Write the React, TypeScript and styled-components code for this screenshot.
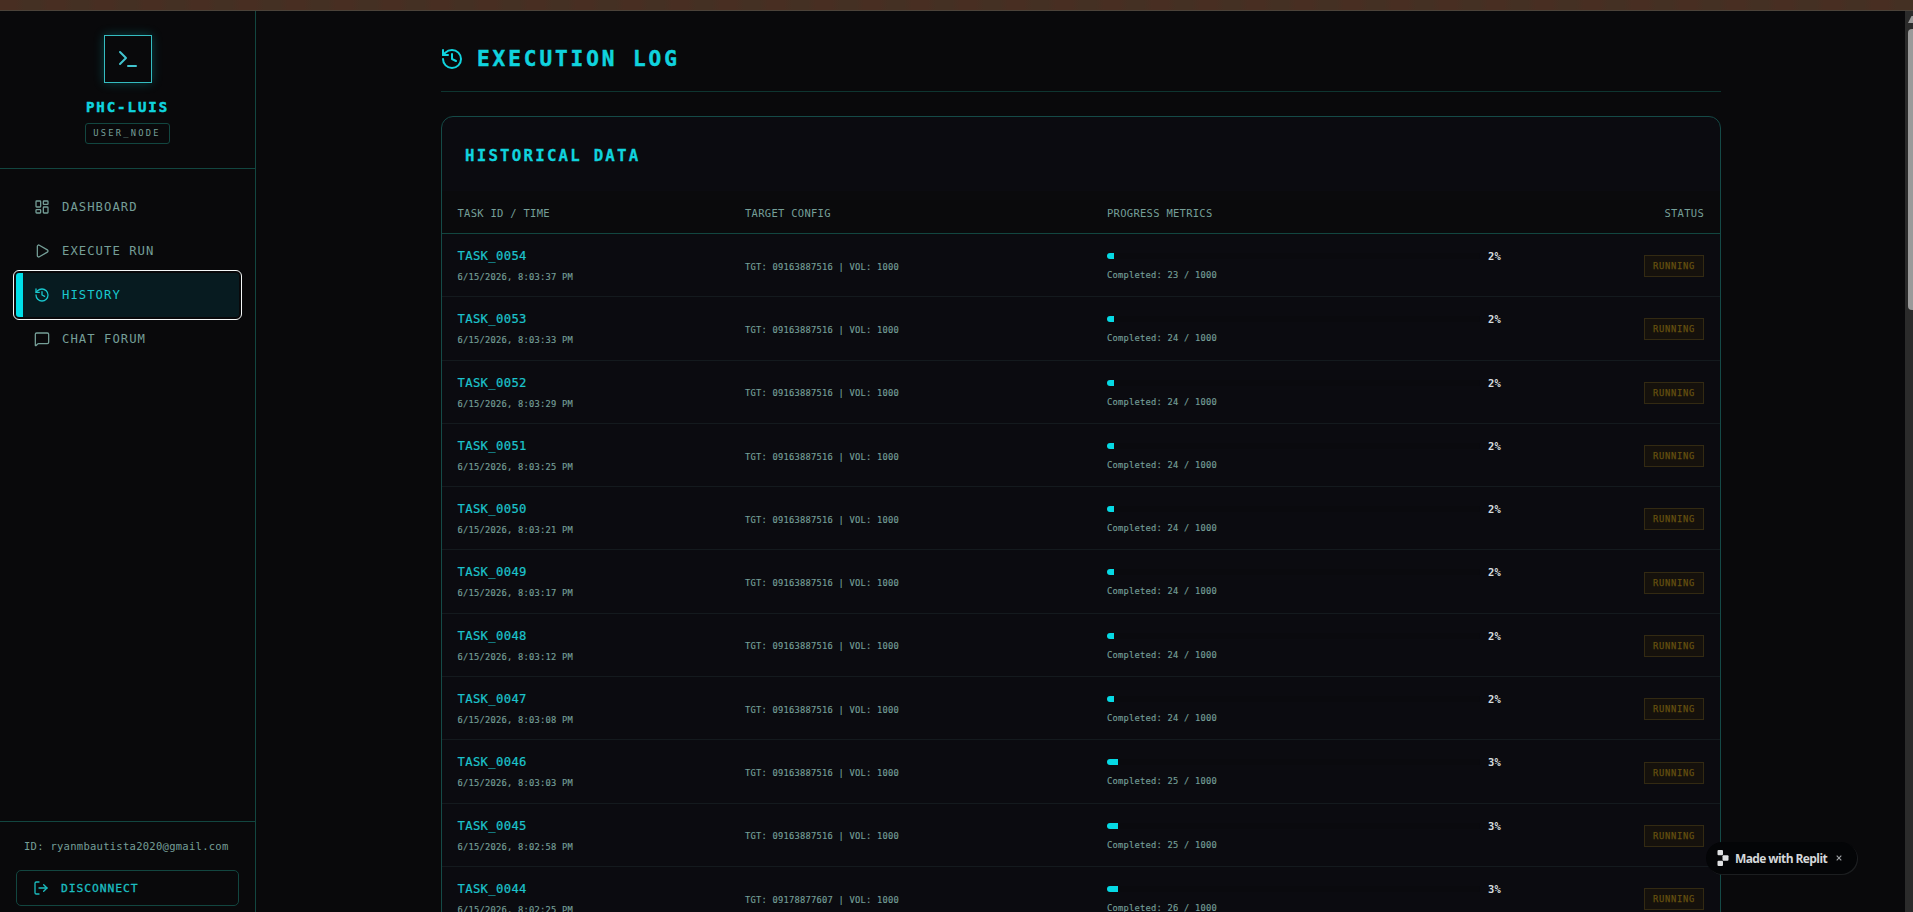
import React from 'react';
import styled, { createGlobalStyle, css } from 'styled-components';
import { LayoutDashboard, Play, History, MessageSquare, LogOut, Terminal } from 'lucide-react';

const cyan = '#10d3de';
const muted = '#759f98';
const line = '#124640';

const Global = createGlobalStyle`
  *, *::before, *::after { box-sizing: border-box; }
  body { margin: 0; background: #09090b; overflow: hidden; }
`;

/* Size is given as the em of the design; glyphs are set at 7/8 of it with a pitch of 0.55em. */
const mono = (size: number, spacing = 0, weight = 400) => css`
  font-family: 'DejaVu Sans Mono', monospace;
  font-size: ${size * 0.875}px;
  letter-spacing: ${size * (0.5498 - 0.602 * 0.875) + spacing}px;
  font-weight: ${weight};
  white-space: pre;
`;

const Screen = styled.div`
  display: flex;
  flex-direction: column;
  width: 100vw;
  height: 100vh;
  overflow: hidden;
  color: ${muted};
`;

const TopStrip = styled.div`
  flex: 0 0 11px;
  border-bottom: 1px solid #4b4239;
  background: repeating-linear-gradient(90deg, #482e22 0 16px, #443023 24px 40px, #482e22 48px);
`;

const Body = styled.div`
  flex: 1;
  min-height: 0;
  display: flex;
`;

const Sidebar = styled.aside`
  flex: 0 0 256px;
  display: flex;
  flex-direction: column;
  border-right: 1px solid ${line};
`;

const Profile = styled.div`
  height: 158px;
  padding-top: 24px;
  display: flex;
  flex-direction: column;
  align-items: center;
  border-bottom: 1px solid ${line};
`;

const LogoBox = styled.div`
  width: 48px;
  height: 48px;
  display: grid;
  place-items: center;
  color: #42c4cf;
  border: 1px solid #35bcc1;
  box-shadow: 0 0 10px rgba(0, 229, 240, 0.25);
`;

const Name = styled.div`
  ${mono(16, 1.6, 700)}
  -webkit-text-stroke: 0.5px currentColor;
  line-height: 24px;
  margin-top: 12px;
  color: ${cyan};
`;

const Role = styled.div`
  ${mono(10, 2)}
  height: 21px;
  margin-top: 4px;
  padding: 0 8px 0 7px;
  line-height: 18px;
  border: 1px solid ${line};
  border-radius: 3px;
`;

const Nav = styled.nav`
  flex: 1;
  padding: 16px;
`;

const NavItem = styled.a<{ $active?: boolean }>`
  ${mono(14, 0.7)}
  display: flex;
  align-items: center;
  gap: 12px;
  height: 44px;
  padding-left: 18px;
  border-radius: 3px;
  color: ${muted};
  ${({ $active }) => $active && css`
    color: #19c9cf;
    padding-left: 11px;
    border-left: 7px solid #00dfe9;
    background: #071b20;
    outline: 1px solid #f4f8f8;
    outline-offset: 2px;
  `}
`;

const Account = styled.div`
  height: 91px;
  padding: 15px 16px 0;
  border-top: 1px solid ${line};
`;

const AccountId = styled.div`
  ${mono(12)}
  line-height: 18px;
  padding-left: 8px;
`;

const Disconnect = styled.button`
  ${mono(13, 0.6)}
  -webkit-text-stroke: 0.3px currentColor;
  display: flex;
  align-items: center;
  gap: 12px;
  width: 223px;
  height: 36px;
  margin-top: 15px;
  padding: 0 0 0 16px;
  color: #1bbdc0;
  background: transparent;
  border: 1px solid ${line};
  border-radius: 5px;
`;

const Main = styled.main`
  flex: 1;
  min-width: 0;
  overflow: hidden;
  display: flex;
  flex-direction: column;
  align-items: center;
`;

const Content = styled.div`
  width: 1280px;
  margin-left: 1px;
`;

const PageTitle = styled.h1`
  ${mono(24, 2.4, 700)}
  -webkit-text-stroke: 0.5px currentColor;
  display: flex;
  align-items: center;
  gap: 12px;
  height: 81px;
  margin: 0;
  padding: 16px 0 0;
  color: ${cyan};
  border-bottom: 1px solid #0e3530;
  svg { margin: 0 0 1px -1px; }
`;

const TitleText = styled.span`
  margin-left: 1px;
`;

const Card = styled.section`
  margin-top: 24px;
  height: 900px;
  border: 1px solid #154a47;
  border-radius: 12px 12px 0 0;
  background: #0b0b10;
  overflow: hidden;
`;

const CardTitle = styled.h2`
  ${mono(18, 1.8, 700)}
  -webkit-text-stroke: 0.3px currentColor;
  margin: 0;
  padding: 27px 23px 0;
  height: 74px;
  line-height: 24px;
  color: ${cyan};
`;

const rowGrid = css`
  display: grid;
  grid-template-columns: 287.5px 362px 1fr 120px;
  padding: 0 16px 0 15.5px;
`;

const HeadRow = styled.div`
  ${rowGrid}
  ${mono(12)}
  height: 43px;
  line-height: 44px;
  background: #0a0a0c;
  border-bottom: 1px solid ${line};
`;

const Right = styled.span`
  text-align: right;
`;

const Row = styled.div`
  ${rowGrid}
  height: 63.3px;
  border-bottom: 1px solid #141a1e;
`;

const TaskId = styled.div`
  ${mono(14)}
  -webkit-text-stroke: 0.2px currentColor;
  line-height: 20px;
  margin-top: 12px;
  color: #1cc3cc;
`;

const Small = styled.div`
  ${mono(10)}
  -webkit-text-stroke: 0.15px currentColor;
  line-height: 15px;
`;

const Stamp = styled(Small)`
  margin-top: 4px;
`;

const Config = styled(Small)`
  align-self: center;
  padding-top: 4px;
`;

const Meter = styled.div`
  display: flex;
  align-items: center;
  height: 16px;
  margin: 14px 0 4px;
`;

const Track = styled.div`
  width: 373px;
  height: 6px;
  border-radius: 3px;
  background: #0a0a0e;
  overflow: hidden;
`;

const Fill = styled.div`
  height: 6px;
  background: #06d9e4;
`;

const Percent = styled.div`
  ${mono(12, 0, 700)}
  margin-left: 8px;
  color: #d5dcdf;
`;

const Status = styled.div`
  ${mono(10, 0.5)}
  -webkit-text-stroke: 0.25px currentColor;
  justify-self: end;
  align-self: center;
  margin-top: 2px;
  height: 22px;
  width: 60px;
  padding-left: 8px;
  line-height: 20px;
  color: #65500f;
  background: #15110c;
  border: 1px solid #332a12;
`;

const Scrollbar = styled.div`
  flex: 0 0 8px;
  background: #2b2b2b;
  padding: 5px 0 0 3px;
`;

const ScrollArrow = styled.svg`
  display: block;
  width: 5px;
  height: 8px;
  margin-bottom: 5px;
`;

const Thumb = styled.div`
  height: 281px;
  background: #9a9a9a;
  border-radius: 4px 0 0 4px;
`;

const ReplitBadge = styled.div`
  position: absolute;
  left: 1706px;
  top: 842px;
  width: 151px;
  height: 32px;
  display: flex;
  align-items: center;
  padding-left: 11px;
  border-radius: 17px;
  background: #040507;
  box-shadow: 1px 1px 0 #1c1e20;
  color: #d5d8da;
  font: 700 12px 'Open Sans', 'Noto Sans', sans-serif;
  letter-spacing: -0.6px;
  white-space: nowrap;
`;

const BadgeText = styled.span`
  width: 93px;
  margin: 0 8px 0 6px;
`;

const nav = [
  { label: 'DASHBOARD', Icon: LayoutDashboard },
  { label: 'EXECUTE RUN', Icon: Play },
  { label: 'HISTORY', Icon: History, active: true },
  { label: 'CHAT FORUM', Icon: MessageSquare },
];

const tasks = [
  { id: '0054', time: '8:03:37', done: 23, pct: 2 },
  { id: '0053', time: '8:03:33', done: 24, pct: 2 },
  { id: '0052', time: '8:03:29', done: 24, pct: 2 },
  { id: '0051', time: '8:03:25', done: 24, pct: 2 },
  { id: '0050', time: '8:03:21', done: 24, pct: 2 },
  { id: '0049', time: '8:03:17', done: 24, pct: 2 },
  { id: '0048', time: '8:03:12', done: 24, pct: 2 },
  { id: '0047', time: '8:03:08', done: 24, pct: 2 },
  { id: '0046', time: '8:03:03', done: 25, pct: 3 },
  { id: '0045', time: '8:02:58', done: 25, pct: 3 },
  { id: '0044', time: '8:02:25', done: 26, pct: 3, target: '09178877607' },
];

export default function App() {
  return (
    <Screen>
      <Global />
      <TopStrip />
      <Body>
        <Sidebar>
          <Profile>
            <LogoBox><Terminal size={24} strokeWidth={2} /></LogoBox>
            <Name>PHC-LUIS</Name>
            <Role>USER_NODE</Role>
          </Profile>
          <Nav>
            {nav.map(({ label, Icon, active }) => (
              <NavItem key={label} $active={active}>
                <Icon size={16} strokeWidth={1.9} />
                {label}
              </NavItem>
            ))}
          </Nav>
          <Account>
            <AccountId>ID: ryanmbautista2020@gmail.com</AccountId>
            <Disconnect><LogOut size={16} />DISCONNECT</Disconnect>
          </Account>
        </Sidebar>
        <Main>
          <Content>
            <PageTitle><History size={24} /><TitleText>EXECUTION LOG</TitleText></PageTitle>
            <Card>
              <CardTitle>HISTORICAL DATA</CardTitle>
              <HeadRow>
                <span>TASK ID / TIME</span>
                <span>TARGET CONFIG</span>
                <span>PROGRESS METRICS</span>
                <Right>STATUS</Right>
              </HeadRow>
              {tasks.map((t) => (
                <Row key={t.id}>
                  <div>
                    <TaskId>TASK_{t.id}</TaskId>
                    <Stamp>6/15/2026, {t.time} PM</Stamp>
                  </div>
                  <Config>TGT: {t.target ?? '09163887516'} | VOL: 1000</Config>
                  <div>
                    <Meter>
                      <Track><Fill style={{ width: `${(t.pct * 3.6).toFixed(1)}px` }} /></Track>
                      <Percent>{t.pct}%</Percent>
                    </Meter>
                    <Small>Completed: {t.done} / 1000</Small>
                  </div>
                  <Status>RUNNING</Status>
                </Row>
              ))}
            </Card>
          </Content>
        </Main>
        <Scrollbar>
          <ScrollArrow viewBox="0 0 5 8"><path d="M0 7 3.5 0H5V7Z" fill="#9a9a9a" /></ScrollArrow>
          <Thumb />
        </Scrollbar>
      </Body>
      <ReplitBadge>
        <svg width="12" height="16" viewBox="0 0 12 16" fill="#dfe1e3">
          <rect x="0.5" y="0" width="5.5" height="5.3" rx="1" />
          <rect x="5.5" y="5.3" width="6" height="5.4" rx="1" />
          <rect x="0.5" y="10.7" width="5.5" height="5.3" rx="1" />
        </svg>
        <BadgeText>Made with Replit</BadgeText>
        <svg width="6" height="6" viewBox="0 0 6 6" stroke="#a2a5a8" strokeWidth="1.1">
          <path d="M0.7 0.7 5.3 5.3M5.3 0.7 0.7 5.3" />
        </svg>
      </ReplitBadge>
    </Screen>
  );
}
